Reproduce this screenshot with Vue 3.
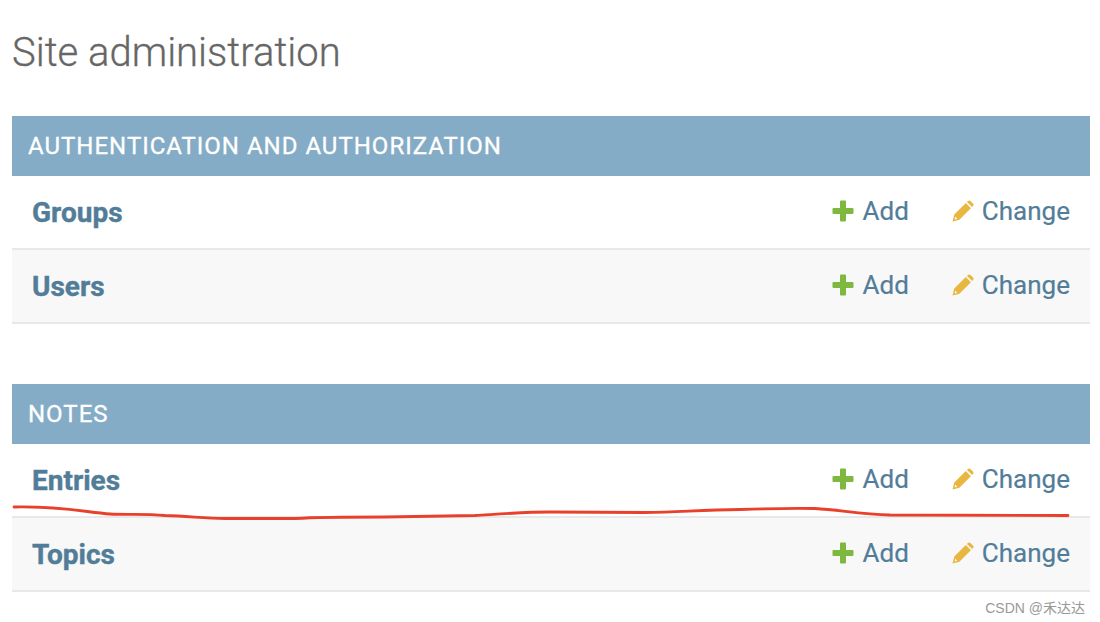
<script setup>
const sections = [
  { title: 'Authentication and Authorization', rows: ['Groups', 'Users'] },
  { title: 'Notes', rows: ['Entries', 'Topics'] },
]
</script>

<template>
  <div class="page">
    <h1 class="title">Site administration</h1>
    <section v-for="s in sections" :key="s.title" class="module">
      <h2 class="caption">{{ s.title }}</h2>
      <div v-for="r in s.rows" :key="r" class="row">
        <a class="name">{{ r }}</a>
        <span class="actions">
          <a class="action add">
            <svg class="icon" width="22" height="22" viewBox="0 0 22 22"><path d="M8 1.500a1 1 0 0 1 1-1h4a1 1 0 0 1 1 1V8h6.500a1 1 0 0 1 1 1v4a1 1 0 0 1-1 1H14v6.500a1 1 0 0 1-1 1H9a1 1 0 0 1-1-1V14H1.500a1 1 0 0 1-1-1V9a1 1 0 0 1 1-1H8z" fill="#7fb83e"/></svg>
            Add
          </a>
          <a class="action change">
            <svg class="icon" width="22" height="22" viewBox="0 0 22 22"><path d="M15 1.900l.9-.9a1.800 1.800 0 0 1 2.500 0l2.600 2.600a1.800 1.800 0 0 1 0 2.500l-.9.900zM13.800 3.100l5.100 5.100L7.400 19.700.5 21.500l1.800-6.900zM3.200 16.700L2.600 19.400l2.700-.6z" fill="#e8b73f" fill-rule="evenodd"/></svg>
            Change
          </a>
        </span>
      </div>
    </section>
    <svg class="scribble" width="1100" height="622" viewBox="0 0 1100 622"><path d="M14 507C60 506 85 512 110 514C125 515 145 513.500 165 515.500C190 516.500 205 518 225 518.500L295 518.500C320 517 345 517 385 517C420 516.500 450 516 475 515.500C500 514 525 512 550 512L645 512.500C680 512 700 510 740 509.500C770 508.500 800 508 815 508.500C840 510 860 514 890 515L1068 515.500" fill="none" stroke="#e8402a" stroke-width="2.800" stroke-linecap="round"/></svg>
    <span class="mark">CSDN @禾达达</span>
  </div>
</template>

<style>
html, body { margin: 0; background: #fff; }
</style>

<style scoped>
.page {
  position: relative;
  width: 1100px;
  height: 622px;
  overflow: hidden;
  box-sizing: border-box;
  padding: 28px 10px 0 12px;
  font-family: Roboto, "Liberation Sans", sans-serif;
  background: #fff;
}
.title {
  margin: 0 0 41px;
  height: 47px;
  font-size: 40px;
  line-height: 49px;
  font-weight: 300;
  color: #666;
  -webkit-text-stroke: 0.3px #666;
}
.module { margin-bottom: 60px; }
.caption {
  margin: 0;
  height: 60px;
  line-height: 61px;
  padding-left: 16px;
  background: #85acc6;
  color: #fff;
  font-size: 24px;
  font-weight: 400;
  letter-spacing: 1px;
  text-transform: uppercase;
  -webkit-text-stroke: 0.3px #fff;
}
.row {
  box-sizing: border-box;
  height: 74px;
  display: flex;
  align-items: center;
  justify-content: space-between;
  padding: 0 20px;
  border-bottom: 2px solid #e8e8e8;
  background: #fff;
}
.row:nth-of-type(even) { background: #f8f8f8; }
.name { color: #527d99; font-size: 28px; font-weight: 700; -webkit-text-stroke: 0.4px #527d99; }
.actions { display: flex; gap: 43px; margin-top: -2px; }
.action { display: flex; align-items: center; gap: 8px; color: #527d99; font-size: 26px; -webkit-text-stroke: 0.2px #527d99; }
.add { margin-right: 0; }
.add .icon { margin-right: 1px; }
.icon { -webkit-text-stroke: 0; }
.scribble { position: absolute; left: 0; top: 0; pointer-events: none; }
.mark {
  position: absolute;
  right: 15px;
  top: 597px;
  font-size: 14px;
  color: #999;
  font-family: "Liberation Sans", "Noto Sans CJK SC", sans-serif;
}
</style>
